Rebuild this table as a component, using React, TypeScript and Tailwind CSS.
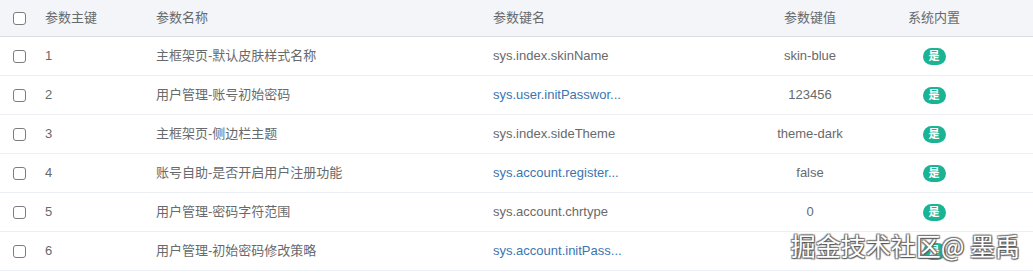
import React from "react";

const rows = [
  { id: "1", name: "主框架页-默认皮肤样式名称", key: "sys.index.skinName", link: false, value: "skin-blue" },
  { id: "2", name: "用户管理-账号初始密码", key: "sys.user.initPasswor...", link: true, value: "123456" },
  { id: "3", name: "主框架页-侧边栏主题", key: "sys.index.sideTheme", link: false, value: "theme-dark" },
  { id: "4", name: "账号自助-是否开启用户注册功能", key: "sys.account.register...", link: true, value: "false" },
  { id: "5", name: "用户管理-密码字符范围", key: "sys.account.chrtype", link: false, value: "0" },
  { id: "6", name: "用户管理-初始密码修改策略", key: "sys.account.initPass...", link: true, value: "0" },
];

const grid = "grid grid-cols-[33px_111px_337px_259px_140px_108px_1fr] items-center";

function Box() {
  return <span className="block w-[13px] h-[13px] rounded-[3px] border border-[#7d7d7d] bg-white ml-[13px]" />;
}

export default function App() {
  return (
    <div
      className="relative w-[1033px] h-[274px] bg-white overflow-hidden text-[13px] text-[#676a6c]"
      style={{ fontFamily: '"Liberation Sans", "Noto Sans CJK SC", sans-serif' }}
    >
      <div className={`${grid} h-[37px] bg-[#f3f5f9] border-b border-[#d9dce1]`}>
        <Box />
        <div className="pl-[12px]">参数主键</div>
        <div className="pl-[12px]">参数名称</div>
        <div className="pl-[12px]">参数键名</div>
        <div className="text-center">参数键值</div>
        <div className="text-center">系统内置</div>
        <div />
      </div>
      {rows.map((r) => (
        <div key={r.id} className={`${grid} h-[39px] border-b border-[#ebeef3]`}>
          <Box />
          <div className="pl-[12px]">{r.id}</div>
          <div className="pl-[12px]">{r.name}</div>
          <div className={`pl-[12px] ${r.link ? "text-[#3b75b0]" : ""}`}>{r.key}</div>
          <div className="text-center">{r.value}</div>
          <div className="flex justify-center">
            <span className="flex items-center justify-center w-[23px] h-[17px] rounded-full bg-[#1ab394] text-white text-[11px] font-bold leading-none">
              是
            </span>
          </div>
          <div />
        </div>
      ))}
      <div
        className="absolute right-[13px] top-[233px] text-[25px] leading-none text-white tracking-[0px]"
        style={{
          fontFamily: '"Noto Sans CJK SC", sans-serif',
          textShadow:
            "1px 1px 1px #555, -1px -1px 1px #777, 1px -1px 1px #777, -1px 1px 1px #777",
        }}
      >
        掘金技术社区@ 墨禹
      </div>
    </div>
  );
}
